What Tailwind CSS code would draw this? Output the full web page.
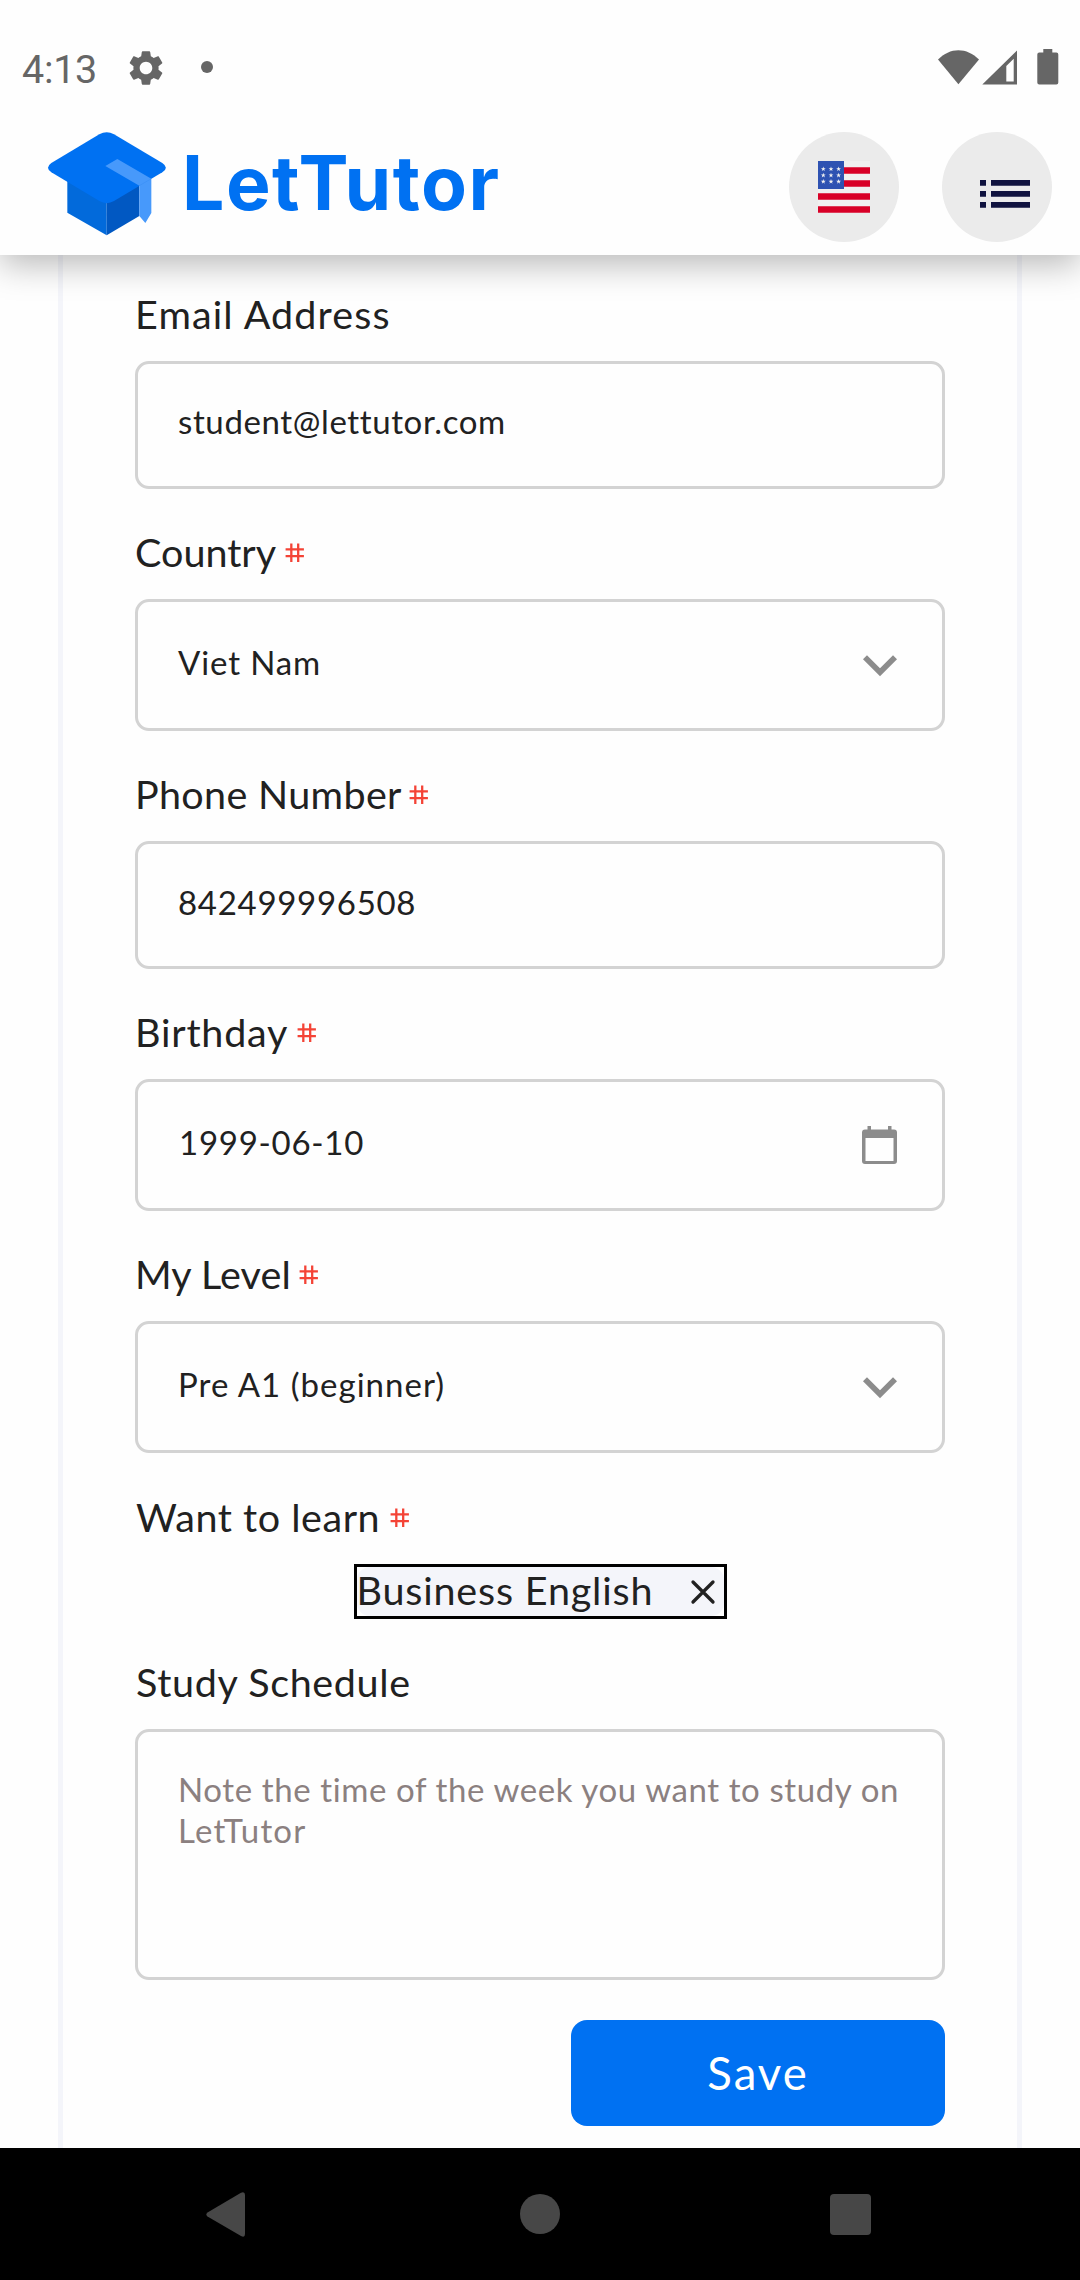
<!DOCTYPE html>
<html lang="en">
<head>
<meta charset="utf-8">
<title>LetTutor</title>
<script src="https://cdn.jsdelivr.net/npm/@tailwindcss/browser@4"></script>
</head>
<body class="bg-white">
<div class="flex h-[2280px] w-[1080px] flex-col overflow-hidden bg-[#fefefe] font-['Lato',sans-serif] text-[#212121]">

  <header class="relative z-10 h-[255px] shrink-0 bg-[#fefefe] shadow-[0_10px_32px_rgba(0,0,0,0.27)]">
    <!-- status bar -->
    <div class="flex h-[120px] items-start text-[#666666]">
      <span class="ml-[22px] mt-[46px] w-[80px] font-['Roboto',sans-serif] text-[39.5px] leading-[48px] tracking-[-0.3px]">4:13</span>
      <svg class="ml-[23px] mt-[46.5px] size-[42px]" viewBox="0 0 24 24" fill="currentColor"><path d="M19.14 12.94c.04-.3.06-.61.06-.94 0-.32-.02-.64-.07-.94l2.03-1.58c.18-.14.23-.41.12-.61l-1.92-3.32c-.12-.22-.37-.29-.59-.22l-2.39.96c-.5-.38-1.03-.7-1.62-.94l-.36-2.54c-.04-.24-.24-.41-.48-.41h-3.84c-.24 0-.43.17-.47.41l-.36 2.54c-.59.24-1.13.57-1.62.94l-2.39-.96c-.22-.08-.47 0-.59.22L2.74 8.87c-.12.21-.08.47.12.61l2.03 1.58c-.05.3-.09.63-.09.94s.02.64.07.94l-2.03 1.58c-.18.14-.23.41-.12.61l1.92 3.32c.12.22.37.29.59.22l2.39-.96c.5.38 1.03.7 1.62.94l.36 2.54c.05.24.24.41.48.41h3.84c.24 0 .44-.17.47-.41l.36-2.54c.59-.24 1.13-.56 1.62-.94l2.39.96c.22.08.47 0 .59-.22l1.92-3.32c.12-.22.07-.47-.12-.61l-2.01-1.58zM12 15.6c-1.98 0-3.6-1.62-3.6-3.6s1.62-3.6 3.6-3.6 3.6 1.62 3.6 3.6-1.62 3.6-3.6 3.6z"/></svg>
      <span class="ml-[34px] mt-[61px] size-3 rounded-full bg-[#666666]"></span>
      <svg class="ml-auto mt-[49px] h-[36px] w-[122px]" viewBox="0 0 122 36" fill="currentColor">
        <path d="M0 10.5C6 4.5 13 1.2 20.4 1.2S35 4.500 41 10.500L20.400 35.300z"/>
        <path fill-rule="evenodd" d="M79 1.500V35.500H44.300zM75.700 9.800L68.300 17V32.500H75.700z"/>
        <path d="M105.300 0h9v3.500h4q2 0 2 2v28q0 2-2 2h-17q-2 0-2-2v-28q0-2 2-2h4z"/>
      </svg>
      <span class="w-5"></span>
    </div>
    <!-- app bar -->
    <div class="flex h-[135px] items-start pl-10 pr-[28px]">
      <svg class="h-[117px] w-[128px]" viewBox="0 0 384 351">
        <path fill="#026adb" d="M82 180L200 240V346L82 278z"/>
        <path fill="#0158c2" d="M200 240L298 190V288L200 346z"/>
        <path fill="#0071f2" d="M178 43Q200 30 222 43L367 129Q388 143 367 157L222 243Q200 256 178 243L34 157Q14 143 34 129z"/>
        <path fill="#4799fb" d="M196 138L232 117 334 176V279L316 309 298 288V197z"/>
        <path stroke="#2d86ef" stroke-width="1" d="M298 197L334 176"/>
      </svg>
      <span class="ml-[14px] mt-[18px] font-['Inter',sans-serif] text-[75px] font-bold leading-[90px] tracking-[1.49px] text-[#0071f2]">LetTutor</span>
      <div class="ml-auto mt-3 flex gap-[43px]">
        <div class="flex size-[110px] items-center justify-center rounded-full bg-[#ebebeb]">
          <svg class="size-[52px]" viewBox="0 0 52 52">
            <path fill="#f0f0f0" d="M0 0h52v52H0z"/>
            <path fill="#d80027" d="M0 6.300h52v6.500H0zM0 19.300h52v6.500H0zM0 32.300h52v6.500H0zM0 45.300h52v6.500H0z"/>
            <path fill="#2e52b2" d="M0 0h26v28H0z"/>
            <defs><path id="s" fill="#f0f0f0" d="M0-2.500L.6-.8H2.400L1 .3 1.500 2.100 0 1-1.500 2.100-1 .3-2.400-.8H-.6z"/></defs>
            <use href="#s" x="5.300" y="8"/><use href="#s" x="13" y="8"/><use href="#s" x="20.600" y="8"/>
            <use href="#s" x="5.300" y="14.300"/><use href="#s" x="13" y="14.300"/><use href="#s" x="20.600" y="14.300"/>
            <use href="#s" x="5.300" y="20.600"/><use href="#s" x="13" y="20.600"/><use href="#s" x="20.600" y="20.600"/>
          </svg>
        </div>
        <div class="flex size-[110px] items-start rounded-full bg-[#ebebeb] pl-[38px] pt-12">
          <svg class="h-7 w-[50px]" viewBox="0 0 50 28" fill="#10133f"><path d="M0 0h6v5.800H0zM11 0h39v5.800H11zM0 11h6v5.800H0zM11 11h39v5.800H11zM0 22h6v5.800H0zM11 22h39v5.800H11z"/></svg>
        </div>
      </div>
    </div>
  </header>

  <svg class="hidden"><defs>
    <symbol id="tag" viewBox="0 0 24 24"><path fill="#f44336" d="M20 10V8h-4V4h-2v4h-4V4H8v4H4v2h4v4H4v2h4v4h2v-4h4v4h2v-4h4v-2h-4v-4h4zm-6 4h-4v-4h4v4z"/></symbol>
    <symbol id="down" viewBox="0 0 24 24"><path fill="#8c8c8c" d="M16.590 8.590L12 13.170 7.410 8.590 6 10l6 6 6-6z"/></symbol>
  </defs></svg>

  <main class="mx-[58px] h-[1893px] shrink-0 border-x-[5px] border-[#f4f5fa] px-[72px] text-[39.5px] leading-[50px]">
    <div class="h-[106px] pt-[34px] tracking-[1.12px]">Email Address</div>
    <div class="h-[128px] rounded-[14px] border-[3px] border-[#d3d3d3] pl-10 pt-[37px] text-[33px] leading-[41px] tracking-[0.62px]">student@lettutor.com</div>

    <div class="flex h-[110px] pt-[38px] tracking-[0px]">Country<svg class="ml-[5px] mt-[12px] size-[27.5px]"><use href="#tag"/></svg></div>
    <div class="flex h-[132px] items-center justify-between rounded-[14px] border-[3px] border-[#d3d3d3] pl-10 pr-[28px] text-[33px] leading-[41px] tracking-[0.86px]"><span class="-mt-[6px]">Viet Nam</span><svg class="size-[68px]"><use href="#down"/></svg></div>

    <div class="flex h-[110px] pt-[38px] tracking-[0.34px]">Phone Number<svg class="ml-[3px] mt-[12px] size-[27.5px]"><use href="#tag"/></svg></div>
    <div class="h-[128px] rounded-[14px] border-[3px] border-[#d3d3d3] pl-10 pt-[38px] text-[33px] leading-[41px] tracking-[0.71px]">842499996508</div>

    <div class="flex h-[110px] pt-[38px] tracking-[0.8px]">Birthday<svg class="ml-[5px] mt-[12px] size-[27.5px]"><use href="#tag"/></svg></div>
    <div class="flex h-[132px] items-center justify-between rounded-[14px] border-[3px] border-[#d3d3d3] pl-[41px] pr-[45px] text-[33px] leading-[41px] tracking-[0.75px]"><span class="-mt-[5px]">1999-06-10</span>
      <svg class="h-[38px] w-[35px]" viewBox="0 0 35 38"><path fill="#8c8c8c" fill-rule="evenodd" d="M5.500 0H9v3.500H26V0h3.500v3.500H32q3 0 3 3V35q0 3-3 3H3q-3 0-3-3V6.500q0-3 3-3h2.500zM3.500 12V35H31.500V12z"/></svg>
    </div>

    <div class="flex h-[110px] pt-[38px] tracking-[0.1px]">My Level<svg class="ml-[4px] mt-[12px] size-[27.5px]"><use href="#tag"/></svg></div>
    <div class="flex h-[132px] items-center justify-between rounded-[14px] border-[3px] border-[#d3d3d3] pl-10 pr-[28px] text-[33px] leading-[41px] tracking-[1.02px]"><span class="-mt-[5px]">Pre A1 (beginner)</span><svg class="size-[68px]"><use href="#down"/></svg></div>

    <div class="flex h-[111px] pl-px pt-[39px] tracking-[0.54px]">Want to learn<svg class="ml-[6px] mt-[12px] size-[27.5px]"><use href="#tag"/></svg></div>
    <div class="mx-auto h-[55px] w-[373px] border-[3px] border-black">
      <div class="flex h-full items-start justify-between rounded-[13px] bg-[#f4f5fa] pr-[8px] leading-[45px] tracking-[0.82px]">Business English
        <svg class="mt-[12px] size-[26px]" viewBox="0 0 26 26" fill="none" stroke="#212121" stroke-width="3.300" stroke-linecap="round"><path d="M3 3L23 23M23 3L3 23"/></svg>
      </div>
    </div>

    <div class="h-[110px] pl-px pt-[38px] tracking-[0.64px]">Study Schedule</div>
    <div class="h-[251px] rounded-[14px] border-[3px] border-[#d3d3d3] pl-10 pt-[37px] text-[33px] leading-[41px] tracking-[0.600px] text-[#8b8080]">Note the time of the week you want to study on<br><span class="tracking-[1.2px]">LetTutor</span></div>

    <div class="ml-auto mt-10 h-[106px] w-[374px] rounded-[16px] bg-[#0071f2] pt-[26px] text-center text-[45.5px] leading-[54px] tracking-[2px] text-white">Save</div>
  </main>

  <!-- system navigation -->
  <nav class="flex grow items-start bg-black pl-[206px] pt-11">
    <svg class="h-[45px] w-[39px]" viewBox="0 0 39 45" fill="#474747"><path d="M1.500 20.500L35 .8Q39-.8 39 3V42Q39 46 35 44L1.500 24.500Q-.8 22.500 1.500 20.500z"/></svg>
    <span class="ml-[275px] mt-[2px] size-10 rounded-full bg-[#474747]"></span>
    <span class="ml-[270px] mt-[2px] size-[41px] rounded-[4px] bg-[#474747]"></span>
  </nav>
</div>
</body>
</html>
